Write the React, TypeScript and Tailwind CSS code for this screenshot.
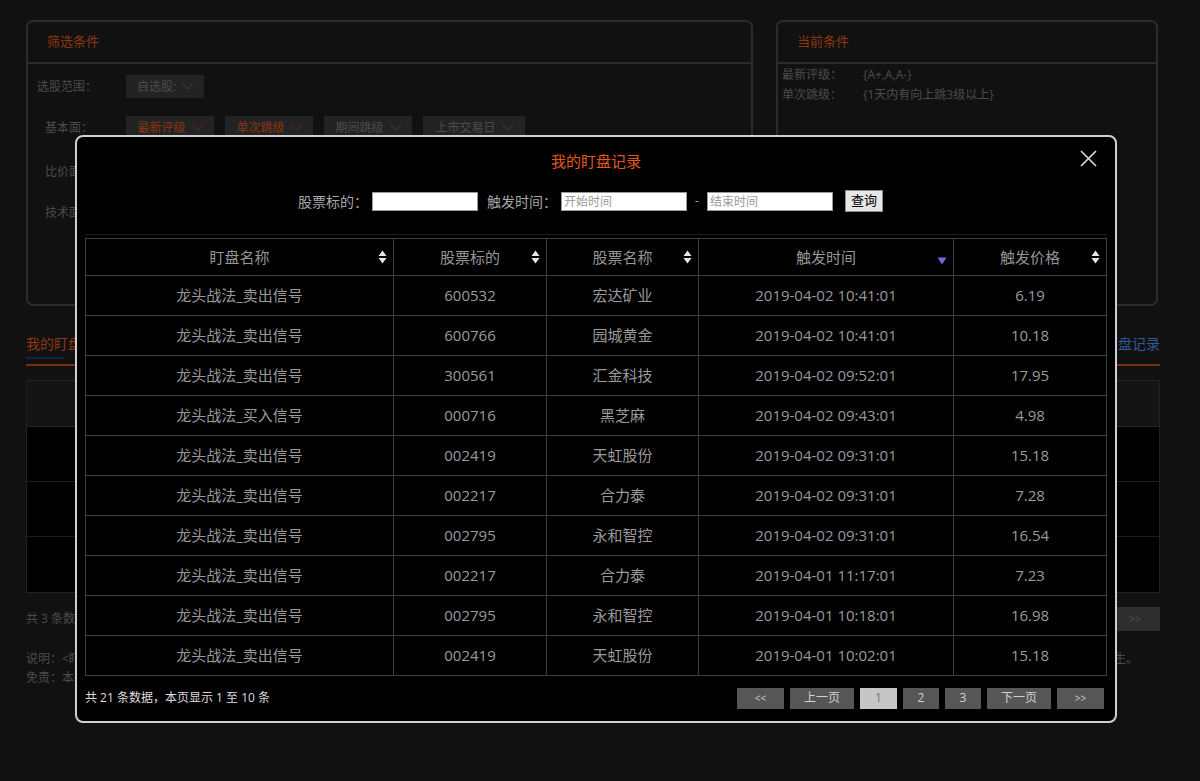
import React from 'react';

const rows: string[][] = [
  ['龙头战法_卖出信号', '600532', '宏达矿业', '2019-04-02 10:41:01', '6.19'],
  ['龙头战法_卖出信号', '600766', '园城黄金', '2019-04-02 10:41:01', '10.18'],
  ['龙头战法_卖出信号', '300561', '汇金科技', '2019-04-02 09:52:01', '17.95'],
  ['龙头战法_买入信号', '000716', '黑芝麻', '2019-04-02 09:43:01', '4.98'],
  ['龙头战法_卖出信号', '002419', '天虹股份', '2019-04-02 09:31:01', '15.18'],
  ['龙头战法_卖出信号', '002217', '合力泰', '2019-04-02 09:31:01', '7.28'],
  ['龙头战法_卖出信号', '002795', '永和智控', '2019-04-02 09:31:01', '16.54'],
  ['龙头战法_卖出信号', '002217', '合力泰', '2019-04-01 11:17:01', '7.23'],
  ['龙头战法_卖出信号', '002795', '永和智控', '2019-04-01 10:18:01', '16.98'],
  ['龙头战法_卖出信号', '002419', '天虹股份', '2019-04-01 10:02:01', '15.18'],
];

function SortBoth() {
  return (
    <svg width="9" height="14" viewBox="0 0 9 14" className="block">
      <path d="M4.5 0.5 L8.5 6 L0.5 6 Z" fill="#e6e6e6" />
      <path d="M4.5 13.5 L8.5 8 L0.5 8 Z" fill="#e6e6e6" />
    </svg>
  );
}

function SortDesc() {
  return (
    <svg width="10" height="8" viewBox="0 0 10 8" className="block">
      <path d="M0.5 0.5 L9.5 0.5 L5 7.5 Z" fill="#6d6ad8" />
    </svg>
  );
}

function Chevron({ color }: { color: string }) {
  return (
    <svg width="11" height="7" viewBox="0 0 11 7" className="block">
      <path d="M0.5 0.5 L5.5 6 L10.5 0.5" fill="none" stroke={color} strokeWidth="1" />
    </svg>
  );
}

function FilterBtn({ label, orange, w }: { label: string; orange?: boolean; w: string }) {
  return (
    <div className={`${w} h-[23px] bg-[#232323] flex items-center justify-center gap-[6px] text-[12px] ${orange ? 'text-[#8a3612]' : 'text-[#4c4c4c]'}`}>
      <span>{label}</span>
      <Chevron color={orange ? '#6a2a10' : '#444444'} />
    </div>
  );
}

const headers = ['盯盘名称', '股票标的', '股票名称', '触发时间', '触发价格'];

export default function App() {
  return (
    <div className="relative w-[1200px] h-[781px] bg-[#111111] overflow-hidden font-['Open_Sans','Noto_Sans_CJK_SC',sans-serif]">
      {/* background page */}
      <div className="pl-[26px] pr-[40px] pt-[20px]">
        <div className="flex gap-[23px]">
          {/* filter panel */}
          <div className="w-[727px] h-[286px] border-2 border-[#2c2c2c] rounded-[7px]">
            <div className="h-[42px] border-b-2 border-[#2c2c2c] flex items-center pl-[19px] text-[13px] text-[#8e3712]">筛选条件</div>
            <div className="flex flex-col pt-[11px] text-[12px] text-[#4c4c4c]">
              <div className="flex items-center h-[23px]">
                <div className="w-[96px] pl-[9px]">选股范围：</div>
                <div className="ml-[2px]"><FilterBtn label="自选股:" w="w-[78px]" /></div>
              </div>
              <div className="flex items-center h-[23px] mt-[18px]">
                <div className="w-[96px] pl-[17px]">基本面：</div>
                <div className="ml-[2px] flex gap-[11px]">
                  <FilterBtn label="最新评级" orange w="w-[88px]" />
                  <FilterBtn label="单次跳级" orange w="w-[88px]" />
                  <FilterBtn label="期间跳级" w="w-[88px]" />
                  <FilterBtn label="上市交易日" w="w-[102px]" />
                </div>
              </div>
              <div className="flex items-center h-[23px] mt-[21px]">
                <div className="w-[96px] pl-[17px]">比价面：</div>
              </div>
              <div className="flex items-center h-[23px] mt-[18px]">
                <div className="w-[96px] pl-[17px]">技术面：</div>
              </div>
            </div>
          </div>
          {/* current conditions */}
          <div className="w-[382px] h-[286px] border-2 border-[#2c2c2c] rounded-[7px]">
            <div className="h-[42px] border-b-2 border-[#2c2c2c] flex items-center pl-[19px] text-[13px] text-[#8e3712]">当前条件</div>
            <div className="pl-[4px] pt-[1px] text-[12px] text-[#4c4c4c] leading-[20px]">
              <div className="flex"><span className="w-[81px]">最新评级：</span><span>{'{A+,A,A-}'}</span></div>
              <div className="flex"><span className="w-[81px]">单次跳级：</span><span>{'{1天内有向上跳3级以上}'}</span></div>
            </div>
          </div>
        </div>

        {/* tabs */}
        <div className="mt-[21px] w-[1134px] relative border-b-2 border-[#7a2e10] h-[39px] flex justify-between items-start">
          <div className="relative text-[14px] text-[#8e3712] pt-[6px]">
            我的盯盘
            <div className="absolute left-0 top-[30px] w-[38px] h-[2px] bg-[#12243f]" />
          </div>
          <div className="text-[14px] text-[#2f5a96] pt-[6px]">查看盯盘记录</div>
        </div>

        {/* background table */}
        <div className="mt-[14px] w-[1134px] border border-[#222222]">
          <div className="h-[46px] bg-[#141414] border-b border-[#252525]" />
          <div className="h-[55px] bg-black border-b border-[#1e1e1e]" />
          <div className="h-[55px] bg-black border-b border-[#1e1e1e]" />
          <div className="h-[55px] bg-black" />
        </div>

        <div className="w-[1134px] flex justify-between items-center mt-[14px]">
          <div className="text-[12px] text-[#4c4c4c]">共 3 条数据</div>
          <div className="w-[50px] h-[24px] bg-[#2e2e2e] text-[11px] text-[#555] flex items-center justify-center">&gt;&gt;</div>
        </div>

        <div className="w-[1134px] mt-[18px] text-[12px] text-[#4c4c4c] leading-[19px]">
          <div className="flex justify-between">
            <span>说明：&lt;盯盘&gt;</span>
            <span className="pr-[22px]">发生。</span>
          </div>
          <div>免责：本页</div>
        </div>
      </div>

      {/* modal */}
      <div className="absolute left-[75px] top-[135px] w-[1042px] h-[588px] bg-black border-2 border-[#cfcfcf] rounded-[8px] px-[8px]">
        <div className="absolute right-[18px] top-[13px]">
          <svg width="17" height="17" viewBox="0 0 17 17">
            <path d="M1 1 L16 16 M16 1 L1 16" stroke="#dddddd" strokeWidth="1.6" />
          </svg>
        </div>
        <div className="pt-[14px] h-[34px] text-center text-[15px] leading-[20px] text-[#e4581d]">我的盯盘记录</div>
        <div className="mt-[19px] h-[22px] flex items-center justify-center text-[14px] text-[#a8a8a8] pr-[11px]">
          <span>股票标的：</span>
          <div className="ml-[4px] w-[106px] h-[19px] bg-white border border-[#999]" />
          <span className="ml-[9px]">触发时间：</span>
          <div className="ml-[4px] w-[126px] h-[19px] bg-white border border-[#999] text-[12px] text-[#9a9a9a] leading-[17px] pl-[2px]">开始时间</div>
          <span className="mx-[8px] text-[12px]">-</span>
          <div className="w-[126px] h-[19px] bg-white border border-[#999] text-[12px] text-[#9a9a9a] leading-[17px] pl-[2px]">结束时间</div>
          <div className="ml-[12px] w-[38px] h-[22px] bg-[#e6e6e6] border border-[#8a8a8a] text-[13px] text-black flex items-center justify-center">查询</div>
        </div>

        <div className="mt-[22px] border-t border-[#1c1c1c] pt-[3px]">
          <table className="w-[1021px] table-fixed border-collapse">
            <colgroup>
              <col className="w-[308px]" />
              <col className="w-[153px]" />
              <col className="w-[152px]" />
              <col className="w-[255px]" />
              <col className="w-[153px]" />
            </colgroup>
            <thead>
              <tr className="h-[37px]">
                {headers.map((h, i) => (
                  <th key={h} className="relative border border-[#3e3e3e] font-normal text-[15px] text-[#969696] p-0">
                    <span>{h}</span>
                    <span className={`absolute right-[6px] ${i === 3 ? 'top-[18px]' : 'top-[11px]'}`}>
                      {i === 3 ? <SortDesc /> : <SortBoth />}
                    </span>
                  </th>
                ))}
              </tr>
            </thead>
            <tbody>
              {rows.map((r, ri) => (
                <tr key={ri} className="h-[40px]">
                  {r.map((c, ci) => (
                    <td key={ci} className="border border-[#3e3e3e] text-center text-[15px] text-[#9a9a9a] p-0">{c}</td>
                  ))}
                </tr>
              ))}
            </tbody>
          </table>
        </div>

        <div className="mt-[11px] flex items-center justify-between h-[22px]">
          <div className="text-[12px] text-[#dcdcdc]">共 21 条数据，本页显示 1 至 10 条</div>
          <div className="flex gap-[6px] text-[12px] text-[#d0d0d0] mr-[3px]">
            <div className="w-[47px] h-[21px] bg-[#565656] flex items-center justify-center text-[10px]">&lt;&lt;</div>
            <div className="w-[64px] h-[21px] bg-[#565656] flex items-center justify-center">上一页</div>
            <div className="w-[37px] h-[21px] bg-[#c6c6c6] text-[#777] flex items-center justify-center">1</div>
            <div className="w-[36px] h-[21px] bg-[#565656] flex items-center justify-center">2</div>
            <div className="w-[36px] h-[21px] bg-[#565656] flex items-center justify-center">3</div>
            <div className="w-[64px] h-[21px] bg-[#565656] flex items-center justify-center">下一页</div>
            <div className="w-[47px] h-[21px] bg-[#565656] flex items-center justify-center text-[10px]">&gt;&gt;</div>
          </div>
        </div>
      </div>
    </div>
  );
}
